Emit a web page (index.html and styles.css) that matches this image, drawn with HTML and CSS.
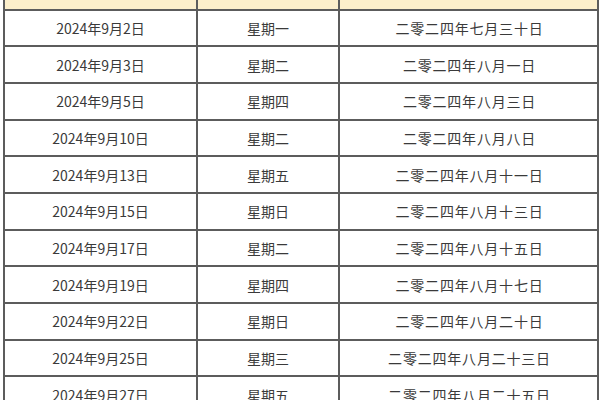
FILE: index.html
```html
<!DOCTYPE html>
<html lang="zh">
<head>
<meta charset="utf-8">
<link rel="stylesheet" href="styles.css">
</head>
<body>
<div class="wrap">
<table class="cal">
<colgroup><col class="c1"><col class="c2"><col class="c3"></colgroup>
<tr class="head"><td></td><td></td><td></td></tr>
<tr><td>2024年9月2日</td><td>星期一</td><td class="lunar">二零二四年七月三十日</td></tr>
<tr><td>2024年9月3日</td><td>星期二</td><td class="lunar">二零二四年八月一日</td></tr>
<tr><td>2024年9月5日</td><td>星期四</td><td class="lunar">二零二四年八月三日</td></tr>
<tr><td>2024年9月10日</td><td>星期二</td><td class="lunar">二零二四年八月八日</td></tr>
<tr><td>2024年9月13日</td><td>星期五</td><td class="lunar">二零二四年八月十一日</td></tr>
<tr><td>2024年9月15日</td><td>星期日</td><td class="lunar">二零二四年八月十三日</td></tr>
<tr><td>2024年9月17日</td><td>星期二</td><td class="lunar">二零二四年八月十五日</td></tr>
<tr><td>2024年9月19日</td><td>星期四</td><td class="lunar">二零二四年八月十七日</td></tr>
<tr><td>2024年9月22日</td><td>星期日</td><td class="lunar">二零二四年八月二十日</td></tr>
<tr><td>2024年9月25日</td><td>星期三</td><td class="lunar">二零二四年八月二十三日</td></tr>
<tr><td>2024年9月27日</td><td>星期五</td><td class="lunar">二零二四年八月二十五日</td></tr>
</table>
</div>
</body>
</html>
```
FILE: styles.css
```css
html, body {
  margin: 0;
  padding: 0;
  background: #ffffff;
}
.wrap {
  width: 600px;
  height: 400px;
  overflow: hidden;
}
.cal {
  margin-left: 3px;
  width: 594px;
  border-collapse: collapse;
  table-layout: fixed;
  font-family: "Noto Sans CJK SC", "Liberation Sans", sans-serif;
  font-size: 14px;
  color: #3a3a3a;
}
.c1 { width: 193px; }
.c2 { width: 142px; }
.c3 { width: 259px; }
.cal td {
  border: 2px solid #5c5c5c;
  text-align: center;
  padding: 0;
  height: 34.7px;
  line-height: 20px;
}
.cal td.lunar {
  letter-spacing: 0.8px;
  padding-left: 2px;
}
.cal tr.head td {
  border-top: none;
  height: 8.5px;
  background: #fcefcb;
}
```
